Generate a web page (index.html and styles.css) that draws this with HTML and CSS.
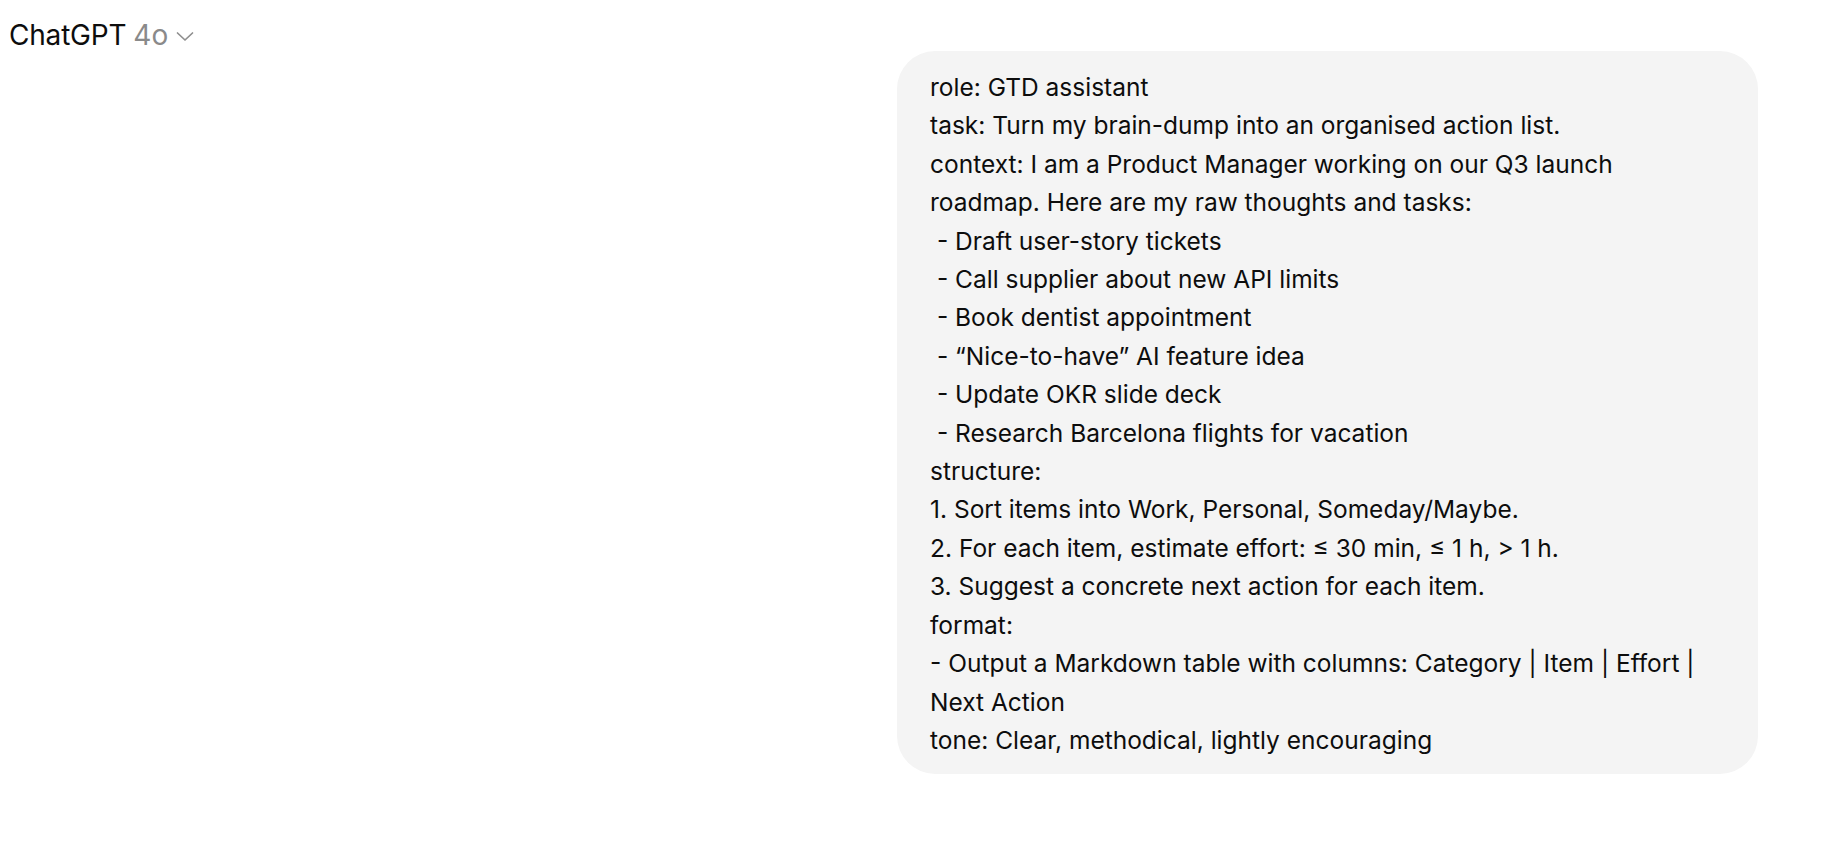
FILE: index.html
```html
<!DOCTYPE html>
<html lang="en">
<head>
<meta charset="utf-8">
<title>ChatGPT</title>
<link rel="stylesheet" href="styles.css">
</head>
<body>
<div class="page">
  <header class="topbar">
    <button class="model-switch">
      <span class="brand">ChatGPT</span>
      <span class="model">4o</span>
      <svg class="chev" width="18" height="11" viewBox="0 0 18 11" fill="none"><path d="M1.5 2 L9 9 L16.5 2" stroke="#8f8f8f" stroke-width="1.7" stroke-linecap="round" stroke-linejoin="round"/></svg>
    </button>
  </header>
  <main class="thread">
    <div class="user-row">
      <div class="bubble">role: GTD assistant
task: Turn my brain-dump into an organised action list.
context: I am a Product Manager working on our Q3 launch roadmap. Here are my raw thoughts and tasks:
 - Draft user-story tickets
 - Call supplier about new API limits
 - Book dentist appointment
 - “Nice-to-have” AI feature idea
 - Update OKR slide deck
 - Research Barcelona flights for vacation
structure:
1. Sort items into Work, Personal, Someday/Maybe.
2. For each item, estimate effort: ≤ 30 min, ≤ 1 h, &gt; 1 h.
3. Suggest a concrete next action for each item.
format:
- Output a Markdown table with columns: Category | Item | Effort | Next Action
tone: Clear, methodical, lightly encouraging</div>
    </div>
  </main>
</div>
</body>
</html>
```

FILE: styles.css
```css
* { box-sizing: border-box; }
html, body { margin: 0; padding: 0; background: #ffffff; }
body {
  font-family: Inter, "Noto Sans", "Liberation Sans", sans-serif;
  color: #0d0d0d;
}
.page { display: flex; flex-direction: column; }
.topbar {
  height: 51px;
  padding-top: 19px;
  padding-left: 9px;
}
.model-switch {
  display: inline-flex;
  align-items: center;
  border: 0;
  background: transparent;
  padding: 0;
  font-family: inherit;
  cursor: pointer;
  height: 32px;
}
.brand { font-size: 28px; color: #0d0d0d; letter-spacing: -0.2px; }
.model { font-size: 28px; color: #8a8a8a; margin-left: 7px; }
.chev { margin-left: 8px; margin-top: 3px; }
.thread { padding-right: 86px; }
.user-row { display: flex; justify-content: flex-end; }
.bubble {
  max-width: 861px;
  background: #f4f4f4;
  border-radius: 38px;
  padding: 17px 32px 15px 33px;
  font-size: 24.5px;
  line-height: 38.4px;
  white-space: pre-wrap;
}
```
